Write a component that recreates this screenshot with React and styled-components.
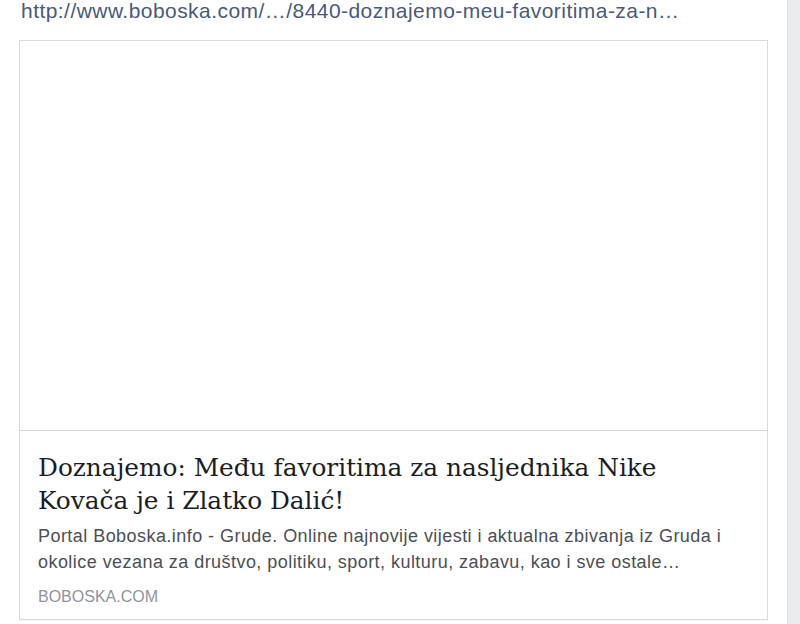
import styled, { createGlobalStyle } from "styled-components";

const GlobalStyle = createGlobalStyle`
  html, body {
    margin: 0;
    padding: 0;
    background: #fff;
  }
`;

const Page = styled.div`
  display: flex;
  width: 800px;
  height: 624px;
  overflow: hidden;
  font-family: "Liberation Sans", Arial, sans-serif;
`;

const Feed = styled.div`
  flex: 1;
  display: flex;
  flex-direction: column;
`;

const Gutter = styled.div`
  width: 12px;
  background: #e9ebee;
  border-left: 1px solid #dfe1e5;
`;

const UrlLine = styled.div`
  padding: 1px 0 0 21px;
  height: 39px;
  line-height: 20px;
  font-size: 21px;
  letter-spacing: 0.45px;
  color: #4a5a78;
  white-space: nowrap;
`;

const Card = styled.div`
  margin-left: 19px;
  width: 747px;
  border: 1px solid #d8dadf;
  background: #fff;
  box-shadow: 0 1px 1px rgba(0, 0, 0, 0.04);
`;

const Preview = styled.div`
  height: 389px;
  background: #fff;
  border-bottom: 1px solid #d3d6db;
`;

const Info = styled.div`
  padding: 20px 18px 13px 18px;
`;

const Title = styled.h3`
  margin: 0;
  max-width: 660px;
  font-family: "DejaVu Serif", Georgia, serif;
  font-weight: normal;
  font-size: 24.8px;
  line-height: 33px;
  color: #1a1d24;
`;

const Description = styled.p`
  margin: 6px 0 0;
  font-size: 18px;
  letter-spacing: 0.45px;
  line-height: 26px;
  color: #4b4f56;
`;

const Domain = styled.div`
  margin-top: 13px;
  font-size: 16px;
  line-height: 18px;
  color: #90949c;
  text-transform: uppercase;
`;

export default function App() {
  return (
    <>
      <GlobalStyle />
      <Page>
        <Feed>
          <UrlLine>http://www.boboska.com/…/8440-doznajemo-meu-favoritima-za-n…</UrlLine>
          <Card>
            <Preview />
            <Info>
              <Title>Doznajemo: Među favoritima za nasljednika Nike Kovača je i Zlatko Dalić!</Title>
              <Description>
                Portal Boboska.info - Grude. Online najnovije vijesti i aktualna zbivanja iz Gruda i okolice vezana za društvo, politiku, sport, kulturu, zabavu, kao i sve ostale…
              </Description>
              <Domain>boboska.com</Domain>
            </Info>
          </Card>
        </Feed>
        <Gutter />
      </Page>
    </>
  );
}
